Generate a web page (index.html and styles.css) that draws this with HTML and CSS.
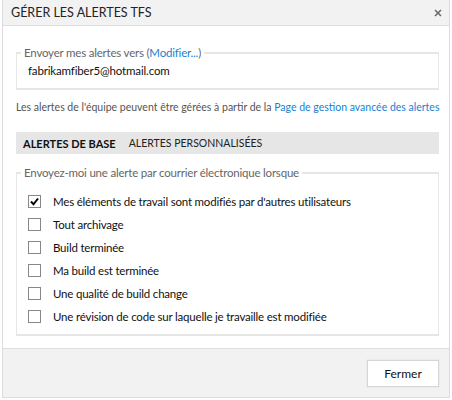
FILE: index.html
```html
<!DOCTYPE html>
<html lang="fr">
<head>
<meta charset="utf-8">
<link rel="stylesheet" href="styles.css">
</head>
<body>
<div class="dialog">
  <div class="header">
    <span class="title">GÉRER LES ALERTES TFS</span>
    <svg class="close" viewBox="0 0 8 8" width="8" height="8"><path d="M1 1 L7 7 M7 1 L1 7" stroke="#6a6a6a" stroke-width="1.6" fill="none"/></svg>
  </div>
  <div class="body">
    <fieldset class="box box-email">
      <legend>Envoyer mes alertes vers (<a class="link">Modifier...</a>)</legend>
      <div class="email">fabrikamfiber5@hotmail.com</div>
    </fieldset>
    <p class="info">Les alertes de l'équipe peuvent être gérées à partir de la <a class="link">Page de gestion avancée des alertes</a></p>
    <div class="tabs">
      <span class="tab active">ALERTES DE BASE</span>
      <span class="tab">ALERTES PERSONNALISÉES</span>
    </div>
    <fieldset class="box box-alerts">
      <legend>Envoyez-moi une alerte par courrier électronique lorsque</legend>
      <ul class="checks">
        <li><span class="cb checked"><svg viewBox="0 0 11 11" width="11" height="11"><path d="M2 5.5 L4.5 8.3 L9 2.5" fill="none" stroke="#000" stroke-width="2"/></svg></span>Mes éléments de travail sont modifiés par d'autres utilisateurs</li>
        <li><span class="cb"></span>Tout archivage</li>
        <li><span class="cb"></span>Build terminée</li>
        <li><span class="cb"></span>Ma build est terminée</li>
        <li><span class="cb"></span>Une qualité de build change</li>
        <li><span class="cb"></span>Une révision de code sur laquelle je travaille est modifiée</li>
      </ul>
    </fieldset>
  </div>
  <div class="footer">
    <button class="btn">Fermer</button>
  </div>
</div>
</body>
</html>
```
FILE: styles.css
```css
html, body { margin: 0; padding: 0; background: #fff; }
body { font-family: "Lato", "Open Sans", sans-serif; color: #222; }
.dialog {
  margin-left: 2px;
  width: 448px;
  height: 398px;
  border: 1px solid #dcdcdc;
  border-top: none;
  display: flex;
  flex-direction: column;
  box-sizing: border-box;
}
.header {
  height: 26px;
  background: #f2f2f2;
  border-bottom: 1px solid #dedede;
  display: flex;
  align-items: center;
  justify-content: space-between;
  padding: 0 7px 0 8px;
  box-sizing: border-box;
}
.title { font-size: 12.5px; color: #222; }
.close { flex: none; }
.body { flex: 1; padding: 20px 10px 0 13px; }
.box {
  margin: 0;
  border: 1px solid #e6e6e6;
  border-width: 2px 1px 2px 1px;
  padding: 0 0 0 11px;
}
.box legend {
  font-size: 11.5px;
  letter-spacing: -0.2px;
  color: #666;
  padding: 0 3px;
  margin-left: -7px;
}
.link { color: #1a7fd0; }
.email { font-size: 11.5px; letter-spacing: -0.15px; color: #111; padding: 5px 0 11px 0; }
.info { font-size: 10.5px; color: #555; margin: 11px 0 0 0; white-space: nowrap; }
.tabs {
  margin-top: 19px;
  background: #e6e6e6;
  height: 22px;
  display: flex;
  align-items: center;
  padding-left: 7px;
  font-size: 10.5px;
  gap: 13px;
}
.tab { color: #222; }
.tab.active { font-weight: bold; color: #111; font-size: 11px; }
.box-alerts { margin-top: 12px; padding-bottom: 6px; }
.checks { list-style: none; margin: 0; padding: 11px 0 0 0; }
.checks li {
  display: flex;
  align-items: center;
  height: 23px;
  font-size: 11.5px;
  letter-spacing: -0.2px;
  color: #111;
}
.cb {
  width: 11px; height: 11px;
  border: 1px solid #888;
  margin-right: 12px;
  display: inline-flex;
  align-items: center; justify-content: center;
  background: #fff;
  flex: none;
}
.cb svg { width: 11px; height: 11px; }
.footer {
  height: 48px;
  background: #f2f2f2;
  border-top: 1px solid #dedede;
  display: flex;
  align-items: center;
  justify-content: flex-end;
  padding-right: 10px;
}
.btn {
  width: 72px; height: 27px;
  background: #fff;
  border: 1px solid #d6d6d6;
  box-shadow: 0 0 0 1px #ececec;
  font-family: inherit;
  font-size: 12px;
  color: #111;
}
```
